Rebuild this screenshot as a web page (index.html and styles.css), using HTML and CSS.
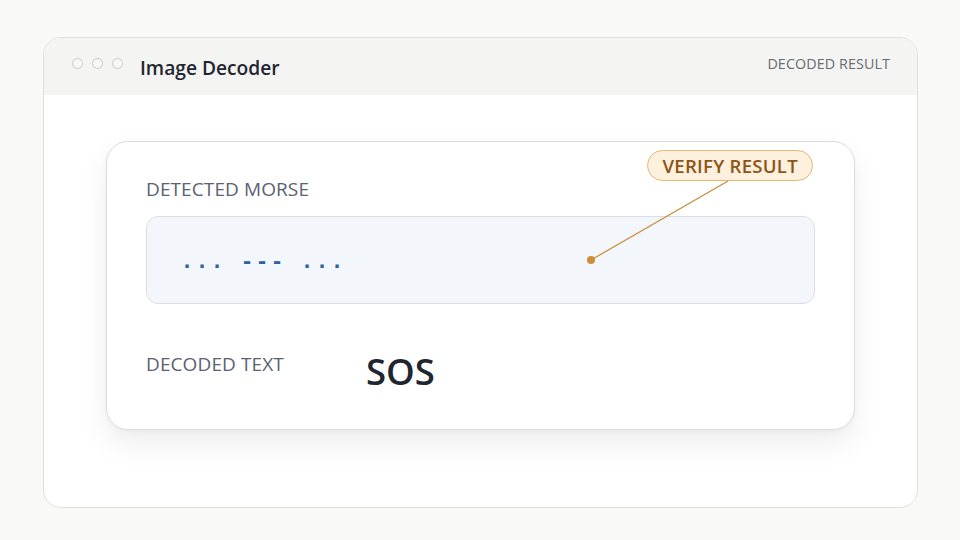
FILE: index.html
```html
<!DOCTYPE html>
<html lang="en">
<head>
<meta charset="utf-8">
<title>Image Decoder</title>
<link rel="stylesheet" href="styles.css">
</head>
<body>
<div class="window">
  <header class="titlebar">
    <div class="lights">
      <span class="light"></span><span class="light"></span><span class="light"></span>
    </div>
    <h1 class="title">Image Decoder</h1>
    <span class="section">DECODED RESULT</span>
  </header>
  <main class="content">
    <section class="card">
      <div class="label">DETECTED MORSE</div>
      <div class="morse-box"><span class="morse">... --- ...</span></div>
      <div class="decoded-row">
        <div class="label decoded-label">DECODED TEXT</div>
        <div class="decoded-value">SOS</div>
      </div>
      <svg class="callout-line" width="749" height="289" viewBox="0 0 749 289" aria-hidden="true">
        <line x1="621" y1="39" x2="484" y2="118" stroke="#c98a36" stroke-width="1.2"/>
        <circle cx="484" cy="118" r="4" fill="#cf8e3a"/>
      </svg>
      <div class="badge">VERIFY RESULT</div>
    </section>
  </main>
</div>
</body>
</html>
```

FILE: styles.css
```css
* { box-sizing: border-box; }

html, body {
  margin: 0;
  padding: 0;
}

body {
  background: #f9f9f7;
  font-family: "Open Sans", "Noto Sans", "Liberation Sans", sans-serif;
  padding: 37px 42px 0 43px;
}

.window {
  width: 875px;
  height: 471px;
  background: #ffffff;
  border: 1px solid #e0e0de;
  border-radius: 18px;
  overflow: hidden;
  display: flex;
  flex-direction: column;
}

.titlebar {
  height: 57px;
  background: #f4f4f3;
  display: flex;
  align-items: center;
  padding: 0 27px 0 28px;
  flex-shrink: 0;
}

.lights {
  display: flex;
  gap: 9px;
  margin-top: -6px;
}

.light {
  width: 11px;
  height: 11px;
  border-radius: 50%;
  border: 1px solid #c9c9c9;
  background: #f7f7f6;
}

.title {
  margin: 2px 0 0 17px;
  font-size: 19.2px;
  font-weight: 600;
  color: #1f2631;
  line-height: 24px;
}

.section {
  margin-left: auto;
  font-size: 14.3px;
  color: #676b72;
  letter-spacing: 0.1px;
  margin-top: -6px;
}

.content {
  flex: 1;
  padding: 46px 62px 0 62px;
}

.card {
  position: relative;
  width: 749px;
  height: 289px;
  background: #ffffff;
  border: 1px solid #dcdcdc;
  border-radius: 22px;
  box-shadow: 0 14px 30px rgba(0, 0, 0, 0.07), 0 2px 6px rgba(0, 0, 0, 0.03);
  padding: 35px 39px 0 39px;
}

.label {
  font-size: 19px;
  line-height: 24px;
  color: #5b6270;
  letter-spacing: 0.1px;
}

.morse-box {
  margin-top: 15px;
  height: 88px;
  background: #f3f6fb;
  border: 1px solid #d9dee6;
  border-radius: 12px;
  display: flex;
  align-items: center;
  padding-left: 34px;
}

.morse {
  font-family: "DejaVu Sans Mono", "Liberation Mono", monospace;
  font-size: 20px;
  line-height: 24px;
  font-weight: 700;
  letter-spacing: 2.96px;
  color: #2b63a0;
  margin-top: 2px;
}

.decoded-row {
  display: flex;
  align-items: flex-start;
  margin-top: 46px;
}

.decoded-label {
  width: 220px;
  margin-top: 2px;
}

.decoded-value {
  font-size: 36.5px;
  line-height: 42px;
  font-weight: 600;
  color: #1f2632;
}

.callout-line {
  position: absolute;
  left: 0;
  top: 0;
  pointer-events: none;
}

.badge {
  position: absolute;
  left: 540px;
  top: 8px;
  height: 31px;
  padding: 0 14px 0 14.5px;
  display: flex;
  align-items: center;
  background: #fdf0dd;
  border: 1.5px solid #e6b774;
  border-radius: 16px;
  font-size: 18.6px;
  font-weight: 600;
  color: #8c5415;
  letter-spacing: 0.25px;
  white-space: nowrap;
}
```
